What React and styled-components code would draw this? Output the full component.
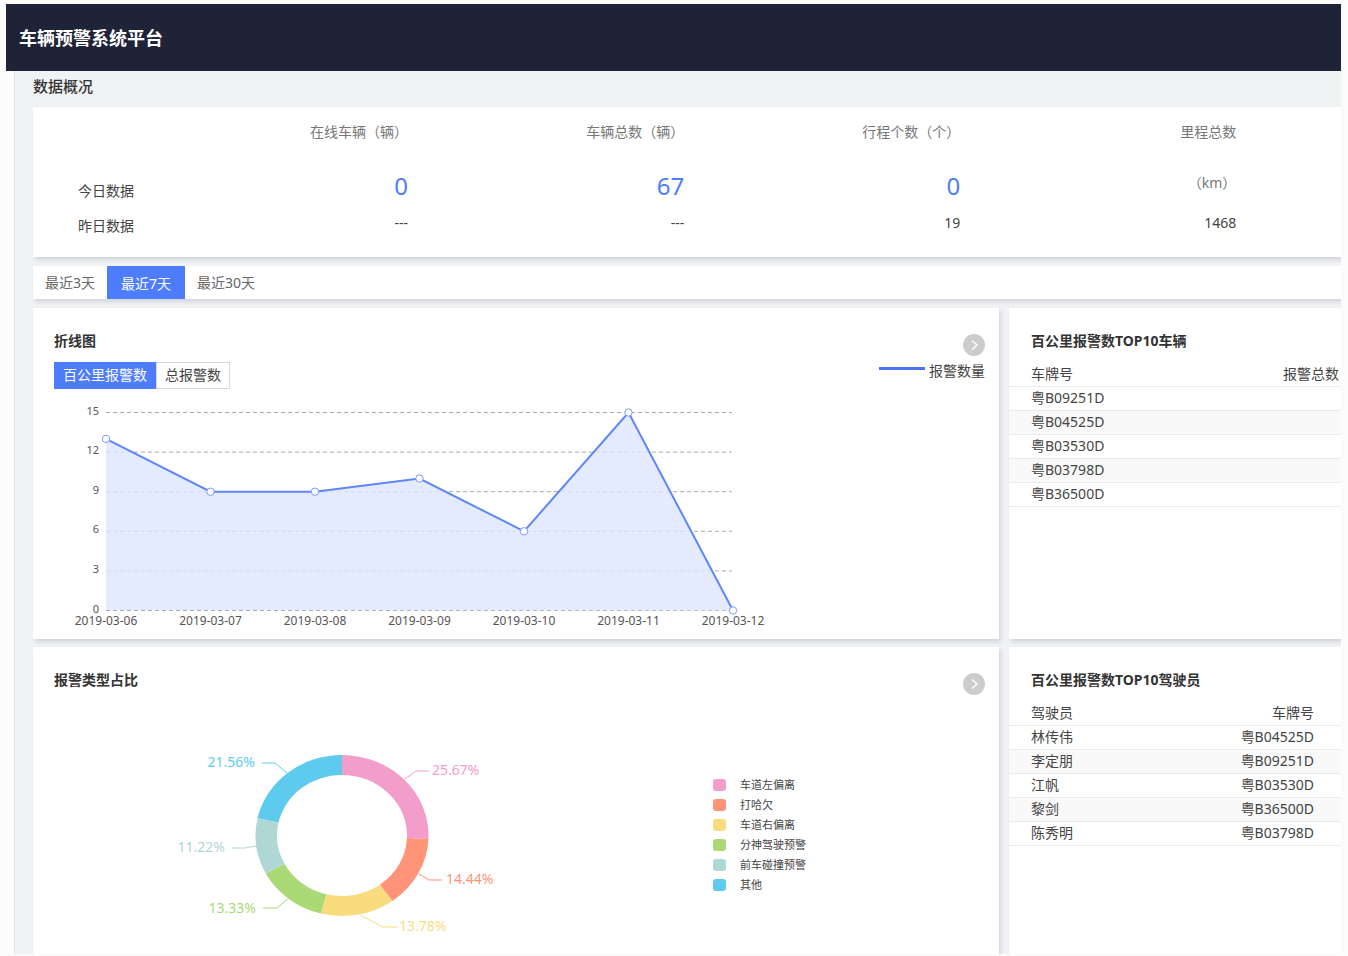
import { useState } from 'react';
import styled, { createGlobalStyle } from 'styled-components';

const GlobalStyle = createGlobalStyle`
  * {
    box-sizing: border-box;
  }

  body {
    margin: 0;
    background-color: #fbfbfc;
    color: #444;
    font-family: 'Noto Sans', 'Noto Sans CJK SC', sans-serif;
    font-size: 14px;
    line-height: 22px;
  }

  button {
    font: inherit;
    cursor: pointer;
  }
`;

const Page = styled.div`
  display: flex;
  flex-direction: column;
  min-height: 100vh;
  padding: 4px 7px 2px 6px;
`;

const Header = styled.header`
  display: flex;
  align-items: center;
  height: 67px;
  padding: 0 13px;
  background-color: #1e2337;
`;

const SiteName = styled.h1`
  margin: 0;
  color: #fff;
  font-size: 18px;
  font-weight: 700;
`;

const Body = styled.div`
  display: flex;
  flex: 1;
`;

const Sidebar = styled.aside`
  flex: 0 0 9px;
  background-color: #fcfcfc;
  border-right: 1px solid #e4e5e8;
`;

const Content = styled.main`
  flex: 1;
  display: flex;
  flex-direction: column;
  min-width: 0;
  padding-left: 18px;
  background-color: #f1f2f4;
  overflow: hidden;
`;

const SectionTitle = styled.h2`
  margin: 0;
  padding: 4px 0 10px;
  color: #333;
  font-size: 15px;
  font-weight: 500;
`;

const Card = styled.section`
  min-width: 0;
  background-color: #fff;
  box-shadow: 2px 3px 4px rgba(40, 40, 80, 0.14);
`;

const StatsCard = styled(Card)`
  height: 150px;
  margin-bottom: 9px;
`;

const StatsTable = styled.table`
  width: 92%;
  table-layout: fixed;
  border-collapse: collapse;

  th,
  td {
    padding: 0;
    font-weight: 400;
    text-align: right;
    vertical-align: top;
    white-space: nowrap;
  }

  thead th {
    height: 51px;
    padding-top: 14px;
    color: #777;
  }

  thead th:first-child {
    width: 99px;
  }
`;

const TodayRow = styled.tr`
  height: 51px;

  > th {
    padding: 22px 0 0 45px;
    text-align: left;
  }
`;

const YesterdayRow = styled.tr`
  > th {
    padding: 6px 0 0 45px;
    text-align: left;
  }

  > td {
    padding-top: 3px;
  }
`;

const BigNumber = styled.td`
  && {
    padding-top: 14px;
  }
  color: #4d7cfe;
  font-size: 24px;
  line-height: 28px;
`;

const Unit = styled.td`
  && {
    padding-top: 14px;
  }
  color: #777;
`;

const RangeBar = styled(Card)`
  display: flex;
  height: 33px;
  margin-bottom: 9px;
`;

const RangeTab = styled.button`
  padding: ${(props) => (props.$active ? '2px 14px 0' : '0 12px')};
  border: 0;
  background-color: ${(props) => (props.$active ? '#4d7cfe' : 'transparent')};
  color: ${(props) => (props.$active ? '#fff' : '#666')};
`;

const Panels = styled.div`
  flex: 1;
  display: grid;
  grid-template-columns: minmax(0, 1fr) 332px;
  grid-template-rows: 331px 1fr;
  gap: 8px 10px;
`;

const ChartCard = styled(Card)`
  padding: 22px 14px 0 21px;
`;

const CardHead = styled.div`
  display: flex;
  justify-content: space-between;
  align-items: flex-start;
  height: 31px;
`;

const CardTitle = styled.h3`
  margin: 0;
  color: #333;
  font-size: 14px;
  font-weight: 700;
`;

const MoreButton = styled.button`
  display: flex;
  align-items: center;
  justify-content: center;
  width: 22px;
  height: 22px;
  margin-top: 4px;
  padding: 0;
  border: 0;
  border-radius: 50%;
  background-color: #ccc;
`;

const ChartTools = styled.div`
  display: flex;
  justify-content: space-between;
  align-items: flex-start;
  padding: 1px 0 11px;
`;

const Switch = styled.div`
  display: flex;
`;

const SwitchButton = styled.button`
  height: 27px;
  padding: 0 8px 2px;
  border: 1px solid ${(props) => (props.$active ? '#4d7cfe' : '#d5d8dd')};
  background-color: ${(props) => (props.$active ? '#4d7cfe' : '#fff')};
  color: ${(props) => (props.$active ? '#fff' : '#444')};
  line-height: 22px;
`;

const LineLegend = styled.div`
  display: flex;
  align-items: flex-start;
  gap: 4px;
  line-height: 18px;
`;

const LegendLine = styled.i`
  width: 46px;
  height: 3px;
  margin-top: 5px;
  background-color: #4d72f0;
`;

const Chart = styled.svg`
  display: block;
  font-family: inherit;
`;

const PieArea = styled.div`
  display: flex;
  align-items: flex-start;
  gap: 187px;
  padding-left: 112px;
`;

const PieLegend = styled.ul`
  margin: 0;
  padding: 75px 0 0;
  list-style: none;
`;

const PieLegendItem = styled.li`
  display: flex;
  align-items: center;
  gap: 14px;
  height: 20px;
  font-size: 11px;

  &::before {
    content: '';
    width: 13px;
    height: 12px;
    border-radius: 3px;
    background-color: ${(props) => props.$color};
  }
`;

const RankCard = styled(Card)`
  padding-top: 22px;
`;

const RankTitle = styled(CardTitle)`
  padding: 0 22px 10px;
`;

const RankTable = styled.table`
  width: 100%;
  border-collapse: collapse;

  th,
  td {
    height: 24px;
    padding: 0 ${(props) => props.$endGap}px 0 22px;
    border-bottom: 1px solid #e9ebef;
    font-weight: 400;
    text-align: left;
  }

  th:last-child,
  td:last-child {
    text-align: right;
  }

  tbody tr:nth-child(even) {
    background-color: #f9f9fa;
  }
`;

const ranges = ['最近3天', '最近7天', '最近30天'];
const metrics = ['百公里报警数', '总报警数'];

const trend = [
  { date: '2019-03-06', value: 13 },
  { date: '2019-03-07', value: 9 },
  { date: '2019-03-08', value: 9 },
  { date: '2019-03-09', value: 10 },
  { date: '2019-03-10', value: 6 },
  { date: '2019-03-11', value: 15 },
  { date: '2019-03-12', value: 0 },
];

// line: leader polyline, label: anchor point of the percentage
const alarmTypes = [
  { name: '车道左偏离', percent: 25.67, color: '#f39dcb', line: '239,79 250,71 263,71', label: [266, 75] },
  { name: '打哈欠', percent: 14.44, color: '#ff9478', line: '253,174 263,180 276,180', label: [280, 184] },
  { name: '车道右偏离', percent: 13.78, color: '#f8dc7e', line: '194,215 217,227 231,227', label: [233, 231] },
  { name: '分神驾驶预警', percent: 13.33, color: '#abd975', line: '122,199 111,208 97,208', label: [90, 213], end: true },
  { name: '前车碰撞预警', percent: 11.22, color: '#aed7d6', line: '90,146 79,148 66,148', label: [59, 152], end: true },
  { name: '其他', percent: 21.56, color: '#5ecbee', line: '121,73 109,63 96,63', label: [89, 67], end: true },
];

const vehicles = ['粤B09251D', '粤B04525D', '粤B03530D', '粤B03798D', '粤B36500D'];

const drivers = [
  ['林传伟', '粤B04525D'],
  ['李定朋', '粤B09251D'],
  ['江帆', '粤B03530D'],
  ['黎剑', '粤B36500D'],
  ['陈秀明', '粤B03798D'],
];

function MoreLink() {
  return (
    <MoreButton type="button" aria-label="查看更多">
      <svg width="22" height="22" viewBox="0 0 22 22" fill="none" stroke="#fff" strokeWidth="1.5">
        <path d="M9 6.5 L14 11 L9 15.5" />
      </svg>
    </MoreButton>
  );
}

function LineChart() {
  const x = (i) => 52 + i * 104.5;
  const y = (v) => 210.5 - v * 13.2;
  const points = trend.map((d, i) => `${x(i)},${y(d.value)}`).join(' ');

  return (
    <Chart width="720" height="232" viewBox="0 0 720 232" fontSize="11" fill="#555">
      {[0, 3, 6, 9, 12, 15].map((tick) => (
        <g key={tick}>
          <line x1="52" x2="678" y1={y(tick)} y2={y(tick)} stroke="#aaa" strokeDasharray="4 3" />
          <text x="45" y={y(tick) + 2} textAnchor="end">{tick}</text>
        </g>
      ))}
      <polygon points={`52,210 ${points}`} fill="#dfe6ff" fillOpacity="0.8" />
      <polyline points={points} fill="none" stroke="#5f86f8" strokeWidth="2" />
      {trend.map((d, i) => (
        <g key={d.date}>
          <circle cx={x(i)} cy={y(d.value)} r="3.7" fill="#fff" stroke="#7d9df9" />
          <text x={x(i)} y="225" fontSize="12" textAnchor="middle">{d.date}</text>
        </g>
      ))}
    </Chart>
  );
}

function slicePath(from, to) {
  const point = (part, rx, ry) => {
    const angle = part * Math.PI * 2;
    return `${176 + rx * Math.sin(angle)} ${135.5 - ry * Math.cos(angle)}`;
  };
  return `M${point(from, 86.5, 80.5)} A86.5 80.5 0 0 1 ${point(to, 86.5, 80.5)}
    L${point(to, 65, 60.5)} A65 60.5 0 0 0 ${point(from, 65, 60.5)} Z`;
}

function PieChart() {
  let total = 0;

  return (
    <Chart width="360" height="240" viewBox="0 0 360 240" fontSize="14">
      {alarmTypes.map((type) => {
        const from = total;
        total += type.percent / 100;
        return (
          <g key={type.name} fill={type.color}>
            <path d={slicePath(from, total)} />
            <polyline points={type.line} fill="none" stroke={type.color} />
            <text x={type.label[0]} y={type.label[1]} textAnchor={type.end ? 'end' : 'start'}>
              {type.percent}%
            </text>
          </g>
        );
      })}
    </Chart>
  );
}

function App() {
  const [range, setRange] = useState('最近7天');
  const [metric, setMetric] = useState('百公里报警数');

  return (
    <Page>
      <GlobalStyle />
      <Header>
        <SiteName>车辆预警系统平台</SiteName>
      </Header>
      <Body>
        <Sidebar />
        <Content>
          <SectionTitle>数据概况</SectionTitle>
          <StatsCard>
            <StatsTable>
              <thead>
                <tr>
                  <th />
                  <th>在线车辆（辆）</th>
                  <th>车辆总数（辆）</th>
                  <th>行程个数（个）</th>
                  <th>里程总数</th>
                </tr>
              </thead>
              <tbody>
                <TodayRow>
                  <th>今日数据</th>
                  <BigNumber>0</BigNumber>
                  <BigNumber>67</BigNumber>
                  <BigNumber>0</BigNumber>
                  <Unit>（km）</Unit>
                </TodayRow>
                <YesterdayRow>
                  <th>昨日数据</th>
                  <td>---</td>
                  <td>---</td>
                  <td>19</td>
                  <td>1468</td>
                </YesterdayRow>
              </tbody>
            </StatsTable>
          </StatsCard>

          <RangeBar>
            {ranges.map((item) => (
              <RangeTab key={item} type="button" $active={item === range} onClick={() => setRange(item)}>
                {item}
              </RangeTab>
            ))}
          </RangeBar>

          <Panels>
            <ChartCard>
              <CardHead>
                <CardTitle>折线图</CardTitle>
                <MoreLink />
              </CardHead>
              <ChartTools>
                <Switch>
                  {metrics.map((item) => (
                    <SwitchButton key={item} type="button" $active={item === metric} onClick={() => setMetric(item)}>
                      {item}
                    </SwitchButton>
                  ))}
                </Switch>
                <LineLegend>
                  <LegendLine />
                  报警数量
                </LineLegend>
              </ChartTools>
              <LineChart />
            </ChartCard>

            <RankCard>
              <RankTitle>百公里报警数TOP10车辆</RankTitle>
              <RankTable $endGap={2}>
                <thead>
                  <tr>
                    <th>车牌号</th>
                    <th>报警总数</th>
                  </tr>
                </thead>
                <tbody>
                  {vehicles.map((plate) => (
                    <tr key={plate}>
                      <td>{plate}</td>
                      <td />
                    </tr>
                  ))}
                </tbody>
              </RankTable>
            </RankCard>

            <ChartCard>
              <CardHead>
                <CardTitle>报警类型占比</CardTitle>
                <MoreLink />
              </CardHead>
              <PieArea>
                <PieChart />
                <PieLegend>
                  {alarmTypes.map((type) => (
                    <PieLegendItem key={type.name} $color={type.color}>
                      {type.name}
                    </PieLegendItem>
                  ))}
                </PieLegend>
              </PieArea>
            </ChartCard>

            <RankCard>
              <RankTitle>百公里报警数TOP10驾驶员</RankTitle>
              <RankTable $endGap={27}>
                <thead>
                  <tr>
                    <th>驾驶员</th>
                    <th>车牌号</th>
                  </tr>
                </thead>
                <tbody>
                  {drivers.map(([name, plate]) => (
                    <tr key={name}>
                      <td>{name}</td>
                      <td>{plate}</td>
                    </tr>
                  ))}
                </tbody>
              </RankTable>
            </RankCard>
          </Panels>
        </Content>
      </Body>
    </Page>
  );
}

export default App;
